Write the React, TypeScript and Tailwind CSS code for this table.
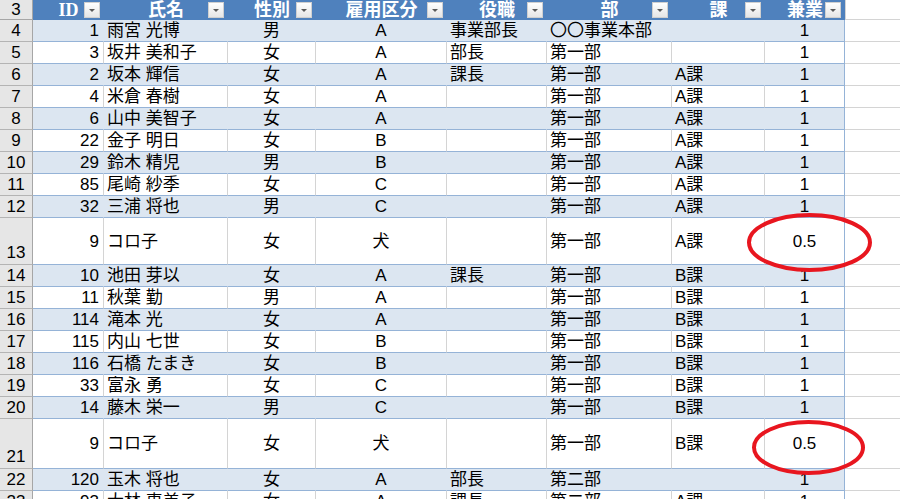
const rows: { n: number; tall?: boolean; d: string[] }[] = [
  { n: 4, d: ["1", "雨宮 光博", "男", "A", "事業部長", "〇〇事業本部", "", "1"] },
  { n: 5, d: ["3", "坂井 美和子", "女", "A", "部長", "第一部", "", "1"] },
  { n: 6, d: ["2", "坂本 輝信", "女", "A", "課長", "第一部", "A課", "1"] },
  { n: 7, d: ["4", "米倉 春樹", "女", "A", "", "第一部", "A課", "1"] },
  { n: 8, d: ["6", "山中 美智子", "女", "A", "", "第一部", "A課", "1"] },
  { n: 9, d: ["22", "金子 明日", "女", "B", "", "第一部", "A課", "1"] },
  { n: 10, d: ["29", "鈴木 精児", "男", "B", "", "第一部", "A課", "1"] },
  { n: 11, d: ["85", "尾崎 紗季", "女", "C", "", "第一部", "A課", "1"] },
  { n: 12, d: ["32", "三浦 将也", "男", "C", "", "第一部", "A課", "1"] },
  { n: 13, tall: true, d: ["9", "コロ子", "女", "犬", "", "第一部", "A課", "0.5"] },
  { n: 14, d: ["10", "池田 芽以", "女", "A", "課長", "第一部", "B課", "1"] },
  { n: 15, d: ["11", "秋葉 勤", "男", "A", "", "第一部", "B課", "1"] },
  { n: 16, d: ["114", "滝本 光", "女", "A", "", "第一部", "B課", "1"] },
  { n: 17, d: ["115", "内山 七世", "女", "B", "", "第一部", "B課", "1"] },
  { n: 18, d: ["116", "石橋 たまき", "女", "B", "", "第一部", "B課", "1"] },
  { n: 19, d: ["33", "富永 勇", "女", "C", "", "第一部", "B課", "1"] },
  { n: 20, d: ["14", "藤木 栄一", "男", "C", "", "第一部", "B課", "1"] },
  { n: 21, tall: true, d: ["9", "コロ子", "女", "犬", "", "第一部", "B課", "0.5"] },
  { n: 22, d: ["120", "玉木 将也", "女", "A", "部長", "第二部", "", "1"] },
  { n: 23, d: ["93", "大林 恵美子", "女", "A", "課長", "第二部", "A課", "1"] },
];

const headers = ["ID", "氏名", "性別", "雇用区分", "役職", "部", "課", "兼業"];

// widths + text alignment per column (incl. right gridline)
const cols = [
  "w-[71px] justify-end pr-[4px]",
  "w-[124px] justify-start pl-[3px]",
  "w-[88px] justify-center",
  "w-[131px] justify-center",
  "w-[100px] justify-start pl-[3px]",
  "w-[125px] justify-start pl-[3px]",
  "w-[93px] justify-start pl-[3px]",
  "w-[80px] justify-center",
];

const rowHeight = (n: number) =>
  n === 13 ? "h-[47px]" : n === 21 ? "h-[50px]" : "h-[22px]";

const FilterButton = () => (
  <div className="absolute right-[4px] top-[2px] w-[16px] h-[16px] border border-[#d0d0d0] bg-gradient-to-b from-white to-[#e6e6e6] flex items-center justify-center">
    <div className="w-0 h-0 border-l-[3px] border-r-[3px] border-t-[3px] border-l-transparent border-r-transparent border-t-[#5a5a5a]" />
  </div>
);

const Ellipse = ({ cx, cy, rx, ry }: { cx: number; cy: number; rx: number; ry: number }) => (
  <ellipse cx={cx} cy={cy} rx={rx} ry={ry} fill="none" stroke="#e8161f" strokeWidth={4} />
);

export default function App() {
  return (
    <div
      className="relative w-[900px] h-[499px] overflow-hidden bg-white text-[17px] text-black"
      style={{ fontFamily: '"Liberation Sans", "Noto Sans CJK JP", sans-serif' }}
    >
      {/* header row */}
      <div className="flex h-[20px]">
        <div className="w-[33px] shrink-0 bg-[#e6e6e6] border-r border-b border-[#a6a6a6] flex items-center justify-center text-[17px] leading-none">
          3
        </div>
        {headers.map((h, i) => (
          <div
            key={h}
            className={`relative shrink-0 bg-[#4f81bd] flex items-center justify-center text-white text-[18px] font-bold leading-none ${cols[i].split(" ")[0]}`}
            style={{ fontFamily: '"Liberation Serif", "Noto Sans CJK JP", serif' }}
          >
            {h}
            <FilterButton />
          </div>
        ))}
        <div className="flex-1 border-b border-l border-[#d4d4d4]" />
      </div>

      {rows.map((r) => {
        const band = r.n % 2 === 0;
        return (
          <div key={r.n} className={`flex ${rowHeight(r.n)}`}>
            <div
              className={`w-[33px] shrink-0 bg-[#e6e6e6] border-r border-b border-r-[#a6a6a6] border-b-[#b4b4b4] flex justify-center text-[17px] leading-none ${
                r.tall ? "items-end pb-[3px]" : "items-center"
              }`}
            >
              {r.n}
            </div>
            {r.d.map((v, i) => (
              <div
                key={i}
                className={`shrink-0 flex items-center whitespace-nowrap leading-none border-b border-r border-b-[#95b3d7] ${cols[i]} ${
                  band ? "bg-[#dce6f1]" : "bg-white"
                } ${i === 7 ? "border-r-[#95b3d7]" : band ? "border-r-[#dce6f1]" : "border-r-[#d4d4d4]"}`}
              >
                {v}
              </div>
            ))}
            <div className="flex-1 border-b border-[#d4d4d4]" />
          </div>
        );
      })}

      <svg className="absolute left-0 top-0 pointer-events-none" width={900} height={499}>
        <Ellipse cx={809.5} cy={242.5} rx={60.5} ry={27.5} />
        <Ellipse cx={808.5} cy={447.5} rx={54.5} ry={25.5} />
      </svg>
    </div>
  );
}
